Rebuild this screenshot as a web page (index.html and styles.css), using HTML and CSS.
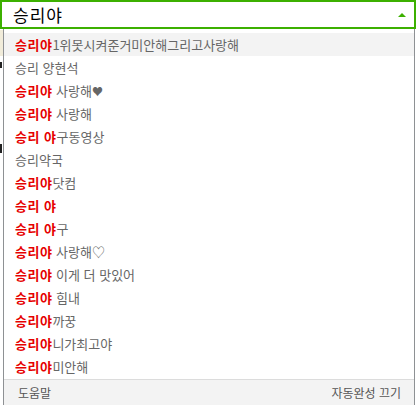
FILE: index.html
```html
<!DOCTYPE html>
<html lang="ko">
<head>
<meta charset="utf-8">
<link rel="stylesheet" href="styles.css">
</head>
<body>
<div class="page">
  <div class="search">
    <span class="query">승리야</span>
    <span class="arrow"></span>
  </div>
  <div class="backdrop">
    <div class="band"></div>
    <div class="mark m1"></div>
    <div class="mark m2"></div>
  </div>
  <div class="suggest">
    <ul class="list">
      <li class="item active"><b>승리야</b>1위못시켜준거미안해그리고사랑해</li>
      <li class="item">승리 양현석</li>
      <li class="item"><b>승리야</b> 사랑해<span class="heart">♥</span></li>
      <li class="item"><b>승리야</b> 사랑해</li>
      <li class="item"><b>승리 야</b>구동영상</li>
      <li class="item">승리약국</li>
      <li class="item"><b>승리야</b>닷컴</li>
      <li class="item"><b>승리 야</b></li>
      <li class="item"><b>승리 야</b>구</li>
      <li class="item"><b>승리야</b> 사랑해♡</li>
      <li class="item"><b>승리야</b> 이게 더 맛있어</li>
      <li class="item"><b>승리야</b> 힘내</li>
      <li class="item"><b>승리야</b>까꿍</li>
      <li class="item"><b>승리야</b>니가최고야</li>
      <li class="item"><b>승리야</b>미안해</li>
    </ul>
    <div class="foot">
      <span class="help">도움말</span>
      <span class="off">자동완성 끄기</span>
    </div>
  </div>
</div>
</body>
</html>
```
FILE: styles.css
```css
* { box-sizing: border-box; }
html, body { margin: 0; padding: 0; background: #fff; }
body {
  font-family: "Noto Sans CJK KR", "Noto Sans", sans-serif;
  width: 416px;
  height: 405px;
  overflow: hidden;
}
.page { position: relative; width: 416px; height: 405px; }

.search {
  height: 29px;
  width: 416px;
  border: 2px solid #3cb000;
  background: #fff;
  display: flex;
  align-items: center;
  justify-content: space-between;
  padding: 0 8px 0 11px;
}
.query {
  font-size: 17px;
  color: #000;
  line-height: 1;
  letter-spacing: 1px;
}
.arrow {
  width: 0;
  height: 0;
  border-left: 4px solid transparent;
  border-right: 4px solid transparent;
  border-bottom: 4px solid #3cb000;
}

.backdrop { position: relative; height: 376px; }
.band { height: 26px; width: 10px; background: #f1ecda; margin-top: 1px; }
.mark { position: absolute; left: 0; width: 2px; background: #222; }
.m1 { top: 32px; height: 6px; }
.m2 { top: 114px; height: 9px; }

.suggest {
  position: absolute;
  top: 29px;
  left: 3px;
  width: 412px;
  border-left: 1px solid #8e9194;
  border-right: 1px solid #8e9194;
  background: #fff;
}
.list {
  list-style: none;
  margin: 0;
  padding: 4px 0 1px;
}
.item {
  height: 23px;
  line-height: 23px;
  padding-left: 11px;
  font-size: 13px;
  color: #666;
  white-space: nowrap;
}
.item.active { background: #f3f3f3; }
.item b { color: #e60000; font-weight: bold; letter-spacing: 0.5px; }
.heart { font-size: 11px; }

.foot {
  border-top: 1px solid #dcdcdc;
  background: #f3f3f3;
  height: 30px;
  display: flex;
  justify-content: space-between;
  align-items: flex-start;
  padding: 4px 13px 0 14px;
  font-size: 12px;
  color: #555;
  line-height: 17px;
}
```
